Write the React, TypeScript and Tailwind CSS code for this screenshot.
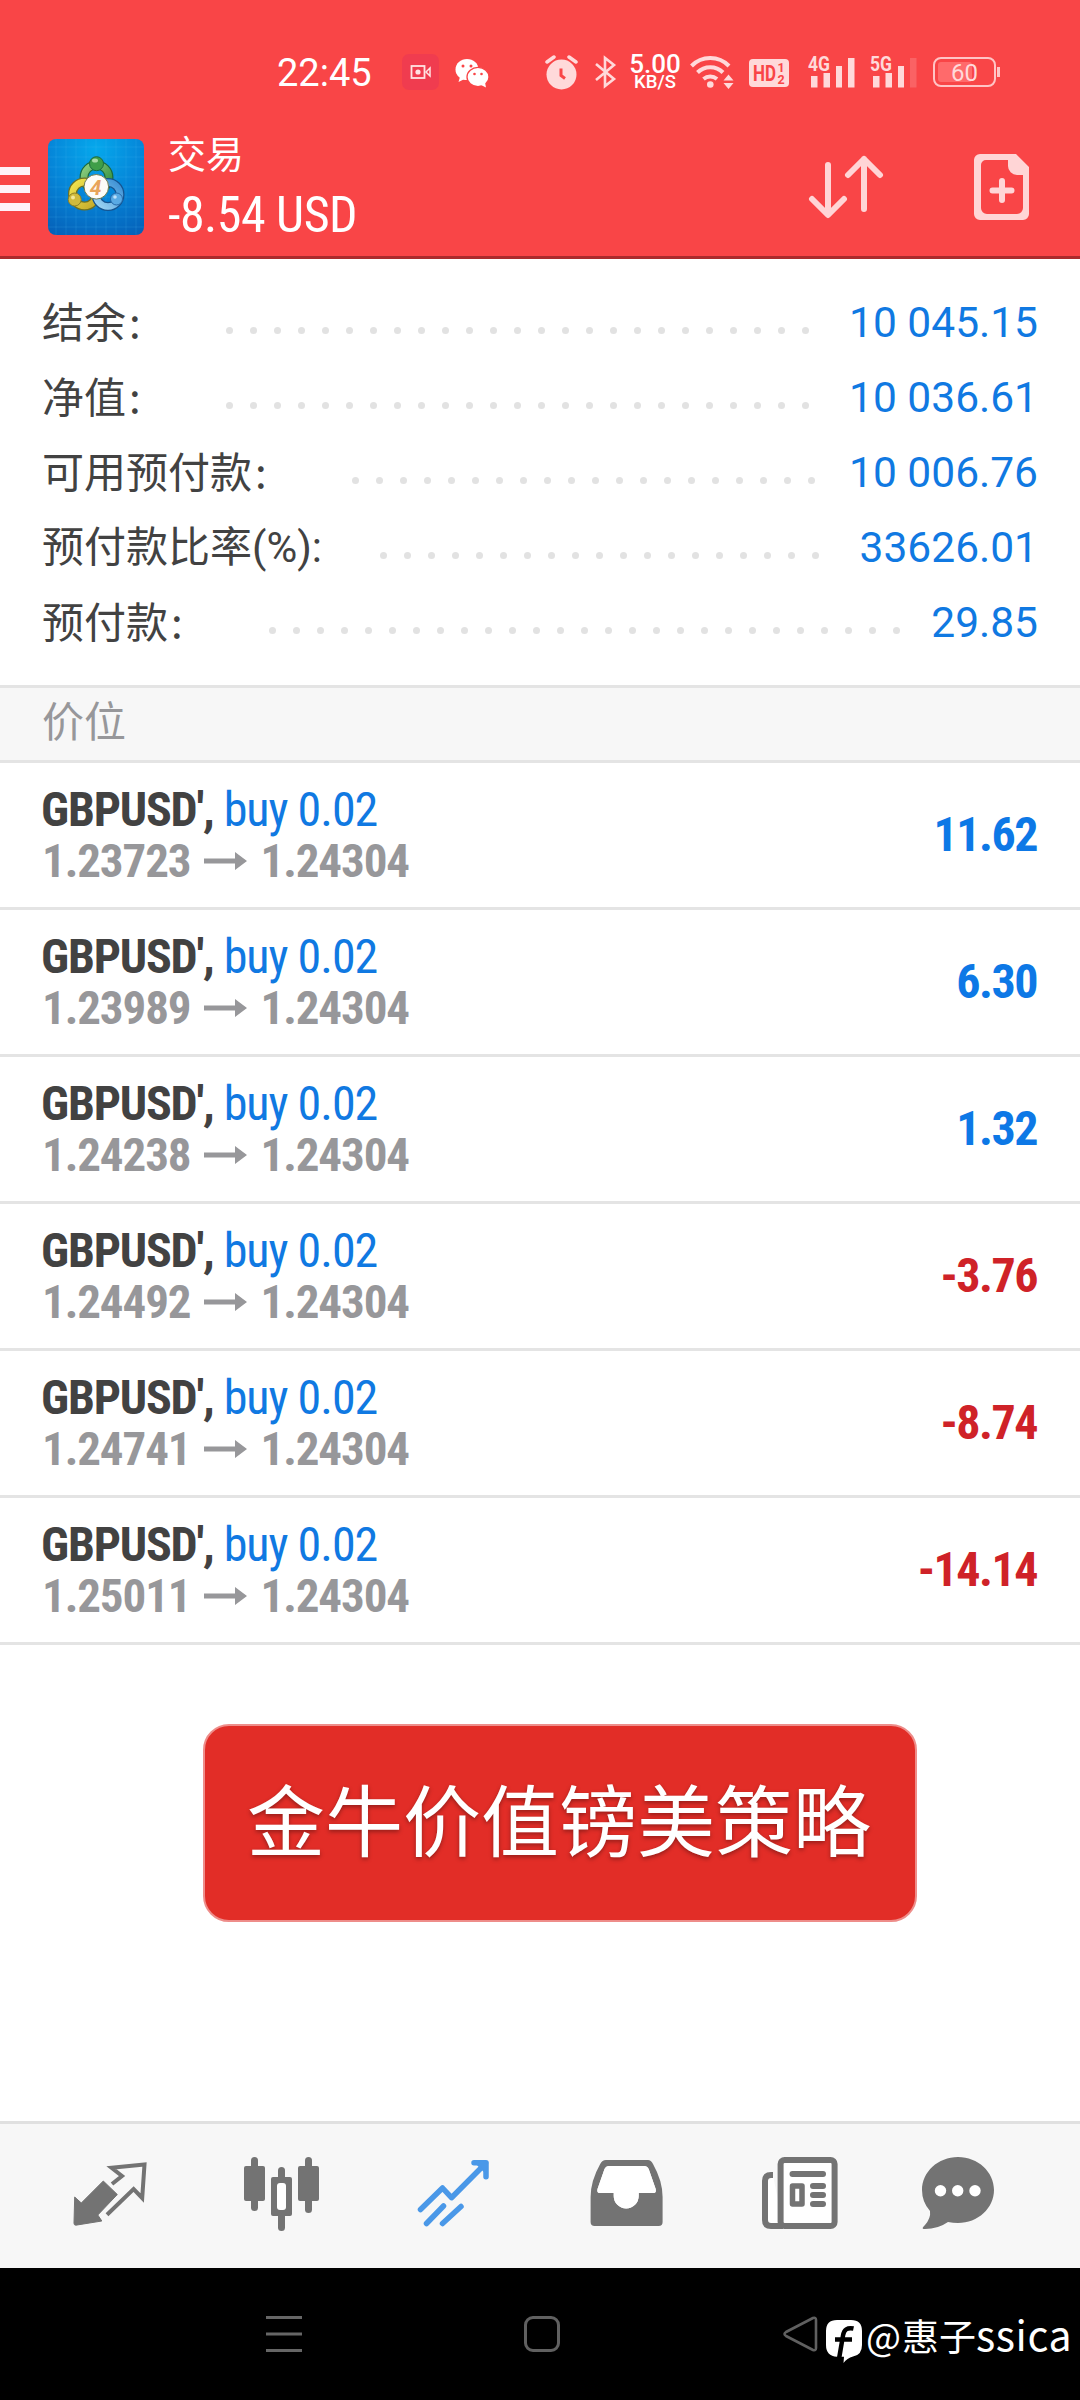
import React from "react";

const CJK = "font-['Noto_Sans_CJK_SC',sans-serif]";

function StatusBar() {
  return (
    <div className="flex h-[144px] items-center pl-[277px] text-white">
      <span className="mt-[1px] w-[96px] text-[38px] leading-none font-[450] whitespace-nowrap">22:45</span>
      <svg className="ml-[29px] h-[36px] w-[37px]" viewBox="0 0 37 36">
        <rect width="37" height="36" rx="7" fill="#f03c4f" />
        <rect x="9.5" y="12" width="13" height="12" fill="none" stroke="#ffe3e3" strokeWidth="1.8" />
        <circle cx="16" cy="18" r="2.6" fill="#ffe3e3" />
        <path d="M24 18l4-4v8z" fill="none" stroke="#ffe3e3" strokeWidth="1.5" />
      </svg>
      <svg className="ml-[15px] mt-[1px] h-[30px] w-[36px]" viewBox="0 0 36 30" fill="#fff">
        <ellipse cx="13" cy="11.5" rx="11.5" ry="10.5" />
        <path d="M6 19l-1.500 5 6-3z" />
        <ellipse cx="24" cy="19" rx="11" ry="9.700" stroke="#f94547" strokeWidth="1.300" />
        <path d="M27 27l5 2.500-1-5z" />
        <g fill="#f94547">
          <circle cx="9" cy="8" r="1.500" /><circle cx="17" cy="8" r="1.500" />
          <circle cx="20.500" cy="16" r="1.300" /><circle cx="27.500" cy="16" r="1.300" />
        </g>
      </svg>
      <svg className="ml-[55px] mt-[1px] h-[36px] w-[33px]" viewBox="0 0 33 36">
        <circle cx="16.500" cy="19.500" r="15" fill="#ffd9da" />
        <path d="M2 7l7-5M31 7l-7-5" stroke="#ffd9da" strokeWidth="3.500" strokeLinecap="round" />
        <path d="M16 13.500v7l4 3" fill="none" stroke="#f94547" strokeWidth="3" />
      </svg>
      <svg className="ml-[16px] h-[34px] w-[23px]" viewBox="0 1 23 34" fill="none" stroke="#ffd9da" strokeWidth="2.600">
        <path d="M2 10l18 15-9 7V4l9 7L2 26" />
      </svg>
      <div className="ml-[11px] flex w-[54px] flex-col items-center font-medium">
        <span className="text-[26px] leading-[20px]">5.00</span>
        <span className="text-[18.5px] leading-[17px]">KB/S</span>
      </div>
      <svg className="ml-[8px] h-[36px] w-[45px]" viewBox="0 0 45 36" fill="none" stroke="#ffd9da" strokeWidth="4">
        <path d="M1.500 12a26 26 0 0 1 37.500 0M7.500 18.500a18 18 0 0 1 25.500 0M13.500 25a10.500 10.500 0 0 1 13.500 0" />
        <g fill="#ffd9da" stroke="none">
          <circle cx="20.300" cy="30.500" r="3.300" />
          <path d="M33.500 26.500l5-6 5 6zM33.500 29h10l-5 6z" />
        </g>
      </svg>
      <svg className="ml-[14px] mt-[1px] h-[28px] w-[40px]" viewBox="0 0 40 28">
        <rect width="40" height="28" rx="4" fill="#ffd9da" />
        <g fill="#f94547" fontFamily="Roboto" fontWeight="700">
          <text x="4" y="21.500" fontSize="22" textLength="23" lengthAdjust="spacingAndGlyphs">HD</text>
          <text x="28.500" y="12.500" fontSize="12.500">1</text>
          <text x="28.500" y="25" fontSize="12.500">2</text>
        </g>
      </svg>
      <Signal className="ml-[18px]" label="4G" />
      <Signal className="ml-[13px]" label="5G" weak />
      <svg className="ml-[14px] h-[32px] w-[69px]" viewBox="0 0 69 32">
        <rect x="2" y="2" width="61" height="28" rx="7" fill="none" stroke="#ffc4c5" strokeWidth="2" />
        <rect x="6" y="6" width="34" height="20" rx="3" fill="#ff6a6b" />
        <path d="M66.500 11v10" stroke="#ffc4c5" strokeWidth="3" />
        <text x="32.500" y="24.500" fontSize="24" fill="#ffd9da" fontFamily="Roboto" textAnchor="middle">60</text>
      </svg>
    </div>
  );
}

function Signal({ label, weak, className }: { label: string; weak?: boolean; className: string }) {
  return (
    <svg className={"h-[46px] w-[49px] " + className} viewBox="0 -6 49 46" fill="#ffd9da">
      <text x="1" y="16" fontSize="20" fontFamily="Roboto" fontWeight="700" textLength="22" lengthAdjust="spacingAndGlyphs">{label}</text>
      <rect x="4" y="21" width="6.500" height="11.500" />
      <rect x="16.500" y="18" width="6.500" height="14.500" />
      <rect x="29" y="11" width="6" height="21.500" />
      <rect x="41" y="3" width="6.500" height="29.500" opacity={weak ? 0.2 : 1} />
    </svg>
  );
}

function AppLogo() {
  return (
    <svg className="h-[96px] w-[96px]" viewBox="0 0 96 96">
      <defs>
        <radialGradient id="bg" cx="0.5" cy="0.1" r="1">
          <stop offset="0" stopColor="#05a8ec" /><stop offset="0.5" stopColor="#0585d8" /><stop offset="1" stopColor="#0560b8" />
        </radialGradient>
        <linearGradient id="g" x1="0" y1="0" x2="1" y2="1"><stop offset="0" stopColor="#8fcf80" /><stop offset="1" stopColor="#2a8a3a" /></linearGradient>
        <linearGradient id="y" x1="0" y1="0" x2="1" y2="1"><stop offset="0" stopColor="#f0e44e" /><stop offset="1" stopColor="#c5a92a" /></linearGradient>
        <linearGradient id="b" x1="1" y1="0" x2="0" y2="1"><stop offset="0" stopColor="#3b8fd4" /><stop offset="1" stopColor="#9fd6f4" /></linearGradient>
      </defs>
      <rect width="96" height="96" rx="8" fill="url(#bg)" />
      <path d="M8 0V96M18 0V96M28 0V96M38 0V96M48 0V96M58 0V96M68 0V96M78 0V96M88 0V96M0 8H96M0 18H96M0 28H96M0 38H96M0 48H96M0 58H96M0 68H96M0 78H96M0 88H96" stroke="#4fc0f5" strokeOpacity="0.18" />
      <g fill="none">
        <circle cx="48.500" cy="38.500" r="12.500" stroke="#1c6a3e" strokeWidth="9" />
        <circle cx="48.500" cy="38.500" r="12.500" stroke="url(#g)" strokeWidth="6.500" />
        <circle cx="36.500" cy="55" r="12" stroke="#6d7022" strokeWidth="9" />
        <circle cx="36.500" cy="55" r="12" stroke="url(#y)" strokeWidth="6.500" />
        <circle cx="60" cy="55.500" r="12" stroke="#155490" strokeWidth="9" />
        <circle cx="60" cy="55.500" r="12" stroke="url(#b)" strokeWidth="6.500" />
      </g>
      <circle cx="48.500" cy="24.700" r="7" fill="#3f9e48" stroke="#1c6a3e" />
      <circle cx="26.700" cy="60.500" r="6.500" fill="#d0ba3c" stroke="#8a8028" />
      <circle cx="68.500" cy="60" r="6" fill="#5aaae4" stroke="#2468a8" />
      <ellipse cx="47" cy="21.500" rx="3" ry="2" fill="#a9dba5" />
      <circle cx="25" cy="58.500" r="2" fill="#f3e89a" />
      <circle cx="67" cy="58" r="1.800" fill="#c0e2fa" />
      <circle cx="48.300" cy="47.800" r="12.300" fill="#fdfcf8" stroke="#6f7a50" />
      <text x="47.500" y="55.500" fontSize="21" fontWeight="700" fontStyle="italic" fontFamily="Roboto" textAnchor="middle" fill="#e8a45a">4</text>
    </svg>
  );
}

function Header() {
  return (
    <header className="h-[259px] border-b-[3px] border-[#ab2a2c] bg-[#f94547]">
      <StatusBar />
      <div className="-mt-[5px] flex h-[96px]">
        <div className="mt-[28px] flex w-[30px] flex-col gap-[10px]">
          <div className="h-[8px] bg-[#fff1f8]" />
          <div className="h-[8px] bg-[#fff1f8]" />
          <div className="h-[8px] bg-[#fff1f8]" />
        </div>
        <div className="ml-[18px]"><AppLogo /></div>
        <div className="ml-[24px] flex flex-1 flex-col text-white">
          <span className={"-mt-[7px] text-[38px] leading-[40px] " + CJK}>交易</span>
          <span className="mt-[22px] text-[50px] leading-[42px] font-[450] tracking-[-0.5px] whitespace-nowrap [font-stretch:75%]">-8.54 USD</span>
        </div>
        <svg className="mt-[12px] h-[72px] w-[78px]" viewBox="806 151 78 72" fill="none" stroke="#ffd5d6" strokeWidth="6" strokeLinecap="round" strokeLinejoin="round">
          <path d="M828 165v49M812 199l16 16 16-16M864 209v-50M848 175l16-16 16 16" />
        </svg>
        <svg className="mt-[12px] mr-[48px] ml-[88px] h-[72px] w-[60px]" viewBox="972 151 60 72">
          <path fillRule="evenodd" fill="#ffd5d6" d="M980 154h36l13 13v47a6 6 0 0 1-6 6h-43a6 6 0 0 1-6-6v-54a6 6 0 0 1 6-6zM986 160a5 5 0 0 0-5 5v43a6 6 0 0 0 6 6h30a6 6 0 0 0 6-6v-33h-6a9 9 0 0 1-9-9v-6z" />
          <path d="M1002 181v19M992.500 190.500h19" stroke="#ffd5d6" strokeWidth="6" strokeLinecap="round" />
        </svg>
      </div>
    </header>
  );
}

const SUMMARY = [
  { label: "结余", suffix: ":", value: "10 045.15", dots: 25, end: "mr-[40px]" },
  { label: "净值", suffix: ":", value: "10 036.61", dots: 25, end: "mr-[40px]" },
  { label: "可用预付款", suffix: ":", value: "10 006.76", dots: 20, end: "mr-[34px]" },
  { label: "预付款比率", suffix: "(%):", value: "33626.01", dots: 19, end: "mr-[41px]" },
  { label: "预付款", suffix: ":", value: "29.85", dots: 27, end: "mr-[31px]" },
];

function Summary() {
  return (
    <section className="h-[426px] pt-[26px] pr-[42px] pl-[42px]">
      {SUMMARY.map((r) => (
        <div key={r.label} className="flex h-[75px] items-center">
          <div className={"flex-1 text-[42px] leading-[75px] whitespace-nowrap text-[#424242] " + (r.suffix === ":" ? "-mt-[7px] " : "-mt-[4px] ") + CJK}>
            {r.label}
            <span className={r.suffix === ":" ? "ml-[3px]" : "font-[Roboto]"}>{r.suffix}</span>
          </div>
          <div className={"mt-[15px] flex gap-[17px] " + r.end}>
            {Array.from({ length: r.dots }, (_, i) => (
              <i key={i} className="size-[7px] rounded-full bg-[#e2e2e2]" />
            ))}
          </div>
          <span className="text-[42.5px] leading-[75px] text-[#1079e2]">{r.value}</span>
        </div>
      ))}
    </section>
  );
}

const POSITIONS = [
  ["1.23723", "11.62"],
  ["1.23989", "6.30"],
  ["1.24238", "1.32"],
  ["1.24492", "-3.76"],
  ["1.24741", "-8.74"],
  ["1.25011", "-14.14"],
];

function Positions() {
  return (
    <section>
      {POSITIONS.map(([open, profit]) => (
        <div key={open} className="flex h-[147px] items-center justify-between border-b-[3px] border-[#e4e4e4] pr-[43px] pl-[41px]">
          <div className="[font-stretch:75%]">
            <div className="text-[48px] leading-[51px] tracking-[-1px] whitespace-nowrap text-[#1079e2]">
              <b className="font-bold tracking-[-1.2px] text-[#424242]">GBPUSD',</b> buy 0.02
            </div>
            <div className="flex items-center pl-[1px] text-[47px] leading-[51px] font-bold tracking-[-1.1px] text-[#97979a]">
              {open}
              <svg className="mr-[13px] ml-[14px] h-[18px] w-[43px]" viewBox="0 0 43 18" fill="#97979a">
                <path d="M0 6.500h31V0l12 9-12 9v-6.500H0z" />
              </svg>
              1.24304
            </div>
          </div>
          <span className={"text-[48px] font-bold tracking-[-1.5px] [font-stretch:75%] " + (profit.startsWith("-") ? "text-[#cf2228]" : "text-[#0d78e6]")}>{profit}</span>
        </div>
      ))}
    </section>
  );
}

function TabBar() {
  return (
    <nav className="h-[147px] border-t-[3px] border-[#e0e0e0] bg-[#f7f7f7]">
      <div className="flex h-full items-center pb-[4px] text-[#737373]">
        <svg className="ml-[70px] h-[80px] w-[80px]" viewBox="70 2154 80 80">
          <path d="M74.700 2197l6.600 6 22-22 14 13.500-19.500 20.500 4 6-26 4.200q-1.800 0-1.800-2z" fill="currentColor" stroke="currentColor" strokeWidth="1" strokeLinejoin="round" />
          <path d="M112 2184l10-8-10.500-8.300 33-3.200-2.300 33.500-8.600-9-26.600 25.700" fill="none" stroke="currentColor" strokeWidth="4" />
        </svg>
        <svg className="ml-[91px] h-[80px] w-[80px]" viewBox="241 2154 80 80" fill="currentColor">
          <rect x="244" y="2166" width="21" height="35" rx="2" /><rect x="251" y="2157" width="7" height="54" rx="3.500" />
          <rect x="298" y="2166" width="21" height="35" rx="2" /><rect x="305" y="2157" width="7" height="56" rx="3.500" />
          <rect x="278" y="2167" width="7" height="64" rx="3.500" /><rect x="271" y="2177" width="21" height="39" rx="2" />
          <rect x="277" y="2183" width="9" height="27" rx="3" fill="#fff" />
        </svg>
        <svg className="ml-[92px] h-[80px] w-[80px]" viewBox="413 2154 80 80" fill="none" stroke="#4a98e8" strokeWidth="5.500" strokeLinecap="round" strokeLinejoin="round">
          <path d="M420.500 2209.500l22-21.500 9 9.700L486 2163M474 2162.700h12v14M426.500 2223.500l17-17.500M442.500 2223.500l18.500-17" />
          <path d="M476 2162.700h10v10z" fill="#4a98e8" strokeWidth="2" />
        </svg>
        <svg className="ml-[94px] h-[80px] w-[80px]" viewBox="587 2154 80 80">
          <path fillRule="evenodd" fill="currentColor" d="M606 2160h42q3 0 5 4 9.600 17 9.600 33v25a4 4 0 0 1-4 4h-64a4 4 0 0 1-4-4v-25q0-16 9.600-33 2-4 5.800-4zM609 2166q-3 0-4.500 3l-7 20q-.800 4 2 4h14.200v3a12.500 12.500 0 0 0 25 0v-3h15q2.800 0 2-4l-7-20q-1.500-3-4.500-3z" />
          <path fill="#fff" d="M609 2166q-3 0-4.500 3l-7 20q-.800 4 2 4h14.200v3a12.500 12.500 0 0 0 25 0v-3h15q2.800 0 2-4l-7-20q-1.500-3-4.500-3z" />
        </svg>
        <svg className="ml-[93px] h-[80px] w-[80px]" viewBox="760 2154 80 80" fill="none" stroke="currentColor" strokeWidth="6">
          <path d="M773 2175h-2q-6 0-6 6v39q0 6 6 6h12z" fill="#fff" stroke="none" />
          <path d="M773 2175h-2q-6 0-6 6v39q0 6 6 6h12" />
          <rect x="780.600" y="2160" width="54" height="66" rx="4" fill="#fff" />
          <path d="M792.500 2174h30.500M813 2186h10M813 2195h10M813 2204h10" strokeLinecap="round" />
          <rect x="792.500" y="2186" width="9.500" height="18" strokeWidth="5.500" strokeLinejoin="round" />
        </svg>
        <svg className="ml-[78px] h-[80px] w-[80px]" viewBox="918 2154 80 80">
          <path fill="currentColor" d="M958 2157c20 0 36 15 36 33s-16 33-36 33q-5 0-10-1-10 7-23 7c-4 0-2-2 0-4q6-7 5-14-8-9-8-21c0-18 16-33 36-33z" />
          <g fill="#fff"><circle cx="940.500" cy="2190.700" r="5.700" /><circle cx="957.700" cy="2190.700" r="5.700" /><circle cx="975" cy="2190.700" r="5.700" /></g>
        </svg>
      </div>
    </nav>
  );
}

function SystemNav() {
  return (
    <footer className="flex h-[132px] items-center bg-black">
      <svg className="ml-[266px] h-[36px] w-[36px]" viewBox="0 0 36 36" stroke="#666" strokeWidth="3">
        <path d="M0 1.500h36M0 18h36M0 34.500h36" />
      </svg>
      <div className="ml-[222px] size-[36px] rounded-[9px] border-[3px] border-[#606060]" />
      <svg className="ml-[222px] h-[38px] w-[37px]" viewBox="0 0 37 38" fill="none" stroke="#606060" strokeWidth="2.600" strokeLinejoin="round">
        <path d="M31 3L4 17q-3 2 0 4l27 14q3 1 3-2V5q0-3-3-2z" />
      </svg>
      <svg className="mt-[14px] ml-[6px] h-[44px] w-[38px]" viewBox="0 0 38 44">
        <path fill="#fff" d="M12 1h14q11 0 11 11v14q0 10-9 11.500-6 1.500-9.500 6.500l.5-6.200h-7q-11-.8-11-11.800V12Q1 1 12 1z" />
        <path fill="none" stroke="#000" strokeWidth="4.500" d="M28.500 9.500q-9-2-10.500 7L14 40M10 20.500h17" />
      </svg>
      <div className={"ml-[3px] text-[37px] leading-[50px] whitespace-nowrap text-white " + CJK}>
        <span className="tracking-[1px]">@</span>惠子<span className="text-[41px] tracking-[0.6px]">ssica</span>
      </div>
    </footer>
  );
}

export default function App() {
  return (
    <div className="flex h-[2400px] w-[1080px] flex-col overflow-hidden bg-white font-[Roboto,sans-serif]">
      <Header />
      <Summary />
      <div className="h-[78px] border-y-[3px] border-[#e4e4e4] bg-[#f7f7f7] pl-[42px]">
        <div className={"text-[42px] leading-[62px] text-[#97979a] " + CJK}>价位</div>
      </div>
      <Positions />
      <div className="flex-1 pt-[79px] pl-[203px]">
        <div className="flex h-[198px] w-[714px] items-center justify-center rounded-[26px] border-2 border-[#ee8d8a] bg-[#e22d27]">
          <span className={"-mt-[13px] -ml-[2px] text-[78px] leading-[90px] text-white [text-shadow:0_2px_4px_rgba(0,0,0,.35)] " + CJK}>金牛价值镑美策略</span>
        </div>
      </div>
      <TabBar />
      <SystemNav />
    </div>
  );
}
